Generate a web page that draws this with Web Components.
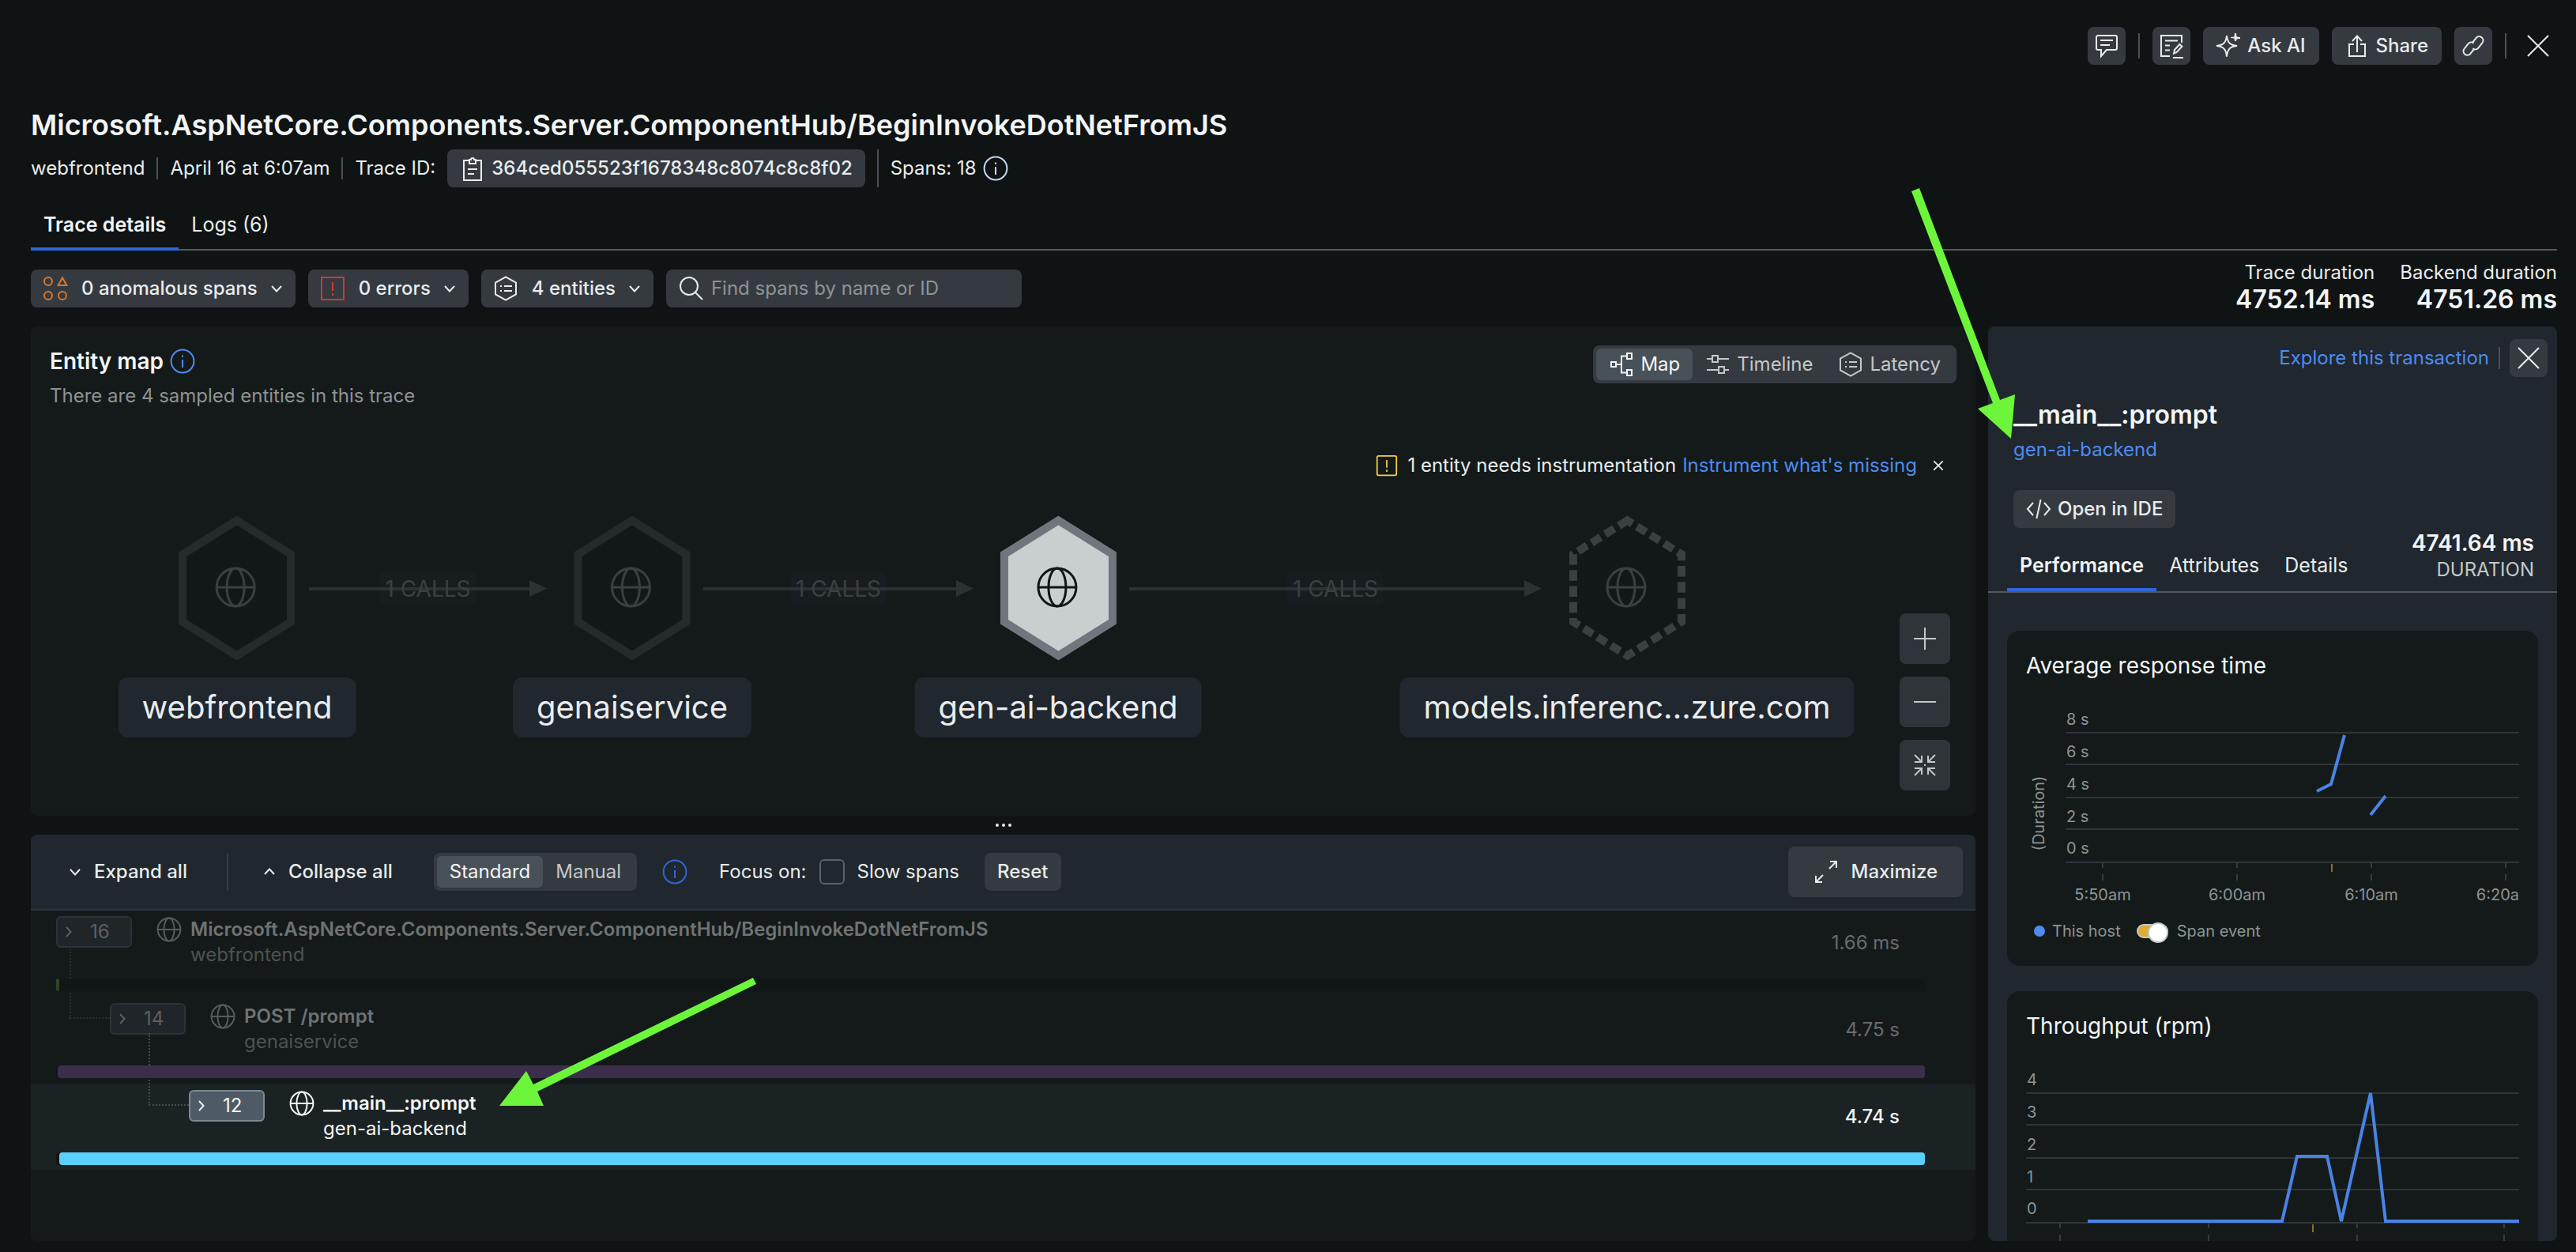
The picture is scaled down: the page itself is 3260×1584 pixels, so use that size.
<!DOCTYPE html>
<html lang="en">
<head>
<meta charset="utf-8">
<title>Trace details</title>
<style>
html,body{margin:0;background:#0f1314;color:#e8ecec;font:24px/32px Inter,"Open Sans",sans-serif}
</style>
</head>
<body>
<trace-page></trace-page>
<script>
const ICONS = {
  comment: '<path d="M2.500 1.500h11a1 1 0 0 1 1 1v7a1 1 0 0 1-1 1H8l-3.500 4v-4h-2a1 1 0 0 1-1-1v-7a1 1 0 0 1 1-1zM4 4.500h8M4 7.500h6"/>',
  note: '<path d="M14.500 6V1.500h-13v13H7M4 4.700h8M4 7.700h3M4 10.700h3M9.500 12.800l.5-2.300 3.200-3.500 1.500 1.400-3.300 3.600zM9 15.500h6.500"/>',
  sparkle: '<path d="M7 1.500C7.500 6 9 7.500 13.500 8 9 8.500 7.500 10 7 14.800 6.500 10 5 8.500.500 8 5 7.500 6.500 6 7 1.500z"/><path d="M12 0h1l.3 2.200 2.200.300v1l-2.200.300L13 5h-1l-.3-1.700L9.500 3V2.500l2.200-.3z" fill="currentColor" stroke="none"/>',
  share: '<path d="M6 7H3v7.500h10V7h-3M8 12V2M5 5l3-3.300L11 5"/>',
  link: '<path d="M7.300 6.200l2.600-3.300a2.500 2.500 0 0 1 3.900 3.100l-2.600 3.300a2.500 2.500 0 0 1-3.500.400M8.700 9.800l-2.600 3.300a2.500 2.500 0 0 1-3.900-3.100l2.600-3.300a2.500 2.500 0 0 1 3.500-.400"/>',
  close: '<path d="M1.500 1.500l13 13M14.500 1.500l-13 13"/>',
  clipboard: '<path d="M6 3H2.500v12.500h11V3H10M6 5V2.500h1a1 1 0 0 1 2 0h1V5zM5 8.500h6M5 11.500h4"/>',
  info: '<circle cx="8" cy="8" r="7.200"/><path d="M8 7v5M8 4.200v1.200"/>',
  anomaly: '<circle cx="3.500" cy="3.500" r="2.500"/><circle cx="3.500" cy="12.500" r="2.500"/><circle cx="12.500" cy="12.500" r="2.500"/><path d="M12.500 1.200l2.700 4.800H9.800z"/>',
  error: '<path d="M1 1h14v14H1zM8 4v5.500M8 11v1.500"/>',
  warning: '<rect x="1" y="1" width="14" height="14" rx="1"/><path d="M8 4v5.500M8 11v1.500"/>',
  hexlist: '<path d="M8 .700l6.500 3.600v7.400L8 15.300l-6.500-3.600V4.300zM7 6.500h5M7 9.500h5M4.500 6.500h1M4.500 9.500h1"/>',
  search: '<circle cx="6.500" cy="6.500" r="5.500"/><path d="M10.500 10.500l4.500 4.500"/>',
  map: '<path d="M1.500 6.500h3v3h-3zM11.500 1h3v3.500h-3zM11.500 11.500h3V15h-3zM4.500 8H8M11.500 2.700H8v10.600h3.500"/>',
  timeline: '<path d="M1 4.500h3.500M8 4.500h7M4.500 2.500h3.500v4H4.500zM1 11.500h7.500M12 11.500h3M8.500 9.500H12v4H8.500z"/>',
  down: '<path d="M4 6l4 4.300L12 6"/>',
  up: '<path d="M4 10l4-4.300L12 10"/>',
  right: '<path d="M6 4l3.700 4L6 12"/>',
  code: '<path d="M4.500 4L1 8l3.500 4M11.500 4L15 8l-3.500 4M9.300 2L6.700 14"/>',
  plus: '<path d="M8 1v14M1 8h14"/>',
  minus: '<path d="M1 8h14"/>',
  fit: '<path d="M1.500 1.500L5.500 5.500M6 2v4H1.500M14.500 1.500l-4 4M10 2v4h4.500M1.500 14.500l4-4M6 14v-4H1.500M14.500 14.500l-4-4M10 14v-4h4.500M7.500 8h1"/>',
  maximize: '<path d="M10 6l4.500-4.500M10.500 1.500h4v4M6 10l-4.500 4.500M5.500 14.500h-4v-4"/>',
  globe: '<circle cx="8" cy="8" r="7.200"/><ellipse cx="8" cy="8" rx="3.300" ry="7.200"/><path d="M.8 8h14.400"/>'
};
class Base extends HTMLElement {
  constructor() { super(); this.attachShadow({ mode: 'open' }); }
  connectedCallback() {
    this.shadowRoot.innerHTML = '<style>*{box-sizing:border-box}' + this.css() + '</style>' + this.html();
  }
  css() { return ''; }
  html() { return '<slot></slot>'; }
  a(n, d = '') { return this.getAttribute(n) ?? d; }
}
const def = (n, c) => customElements.define(n, c);

def('ui-icon', class extends Base {
  css() { return `:host{display:inline-flex;flex:none;width:${this.a('size', 32)}px;height:${this.a('size', 32)}px}
    svg{width:100%;height:100%;fill:none;stroke:currentColor;stroke-width:${this.a('stroke', 1)}}`; }
  html() { return `<svg viewBox="0 0 16 16" aria-hidden="true">${ICONS[this.a('name')]}</svg>`; }
});
def('ui-button', class extends Base {
  css() { return `:host{display:inline-flex;flex:none}
    button{display:flex;align-items:center;justify-content:center;gap:var(--gap,8px);height:var(--h,48px);min-width:48px;padding:var(--pad,0 8px);
    border:0;border-radius:8px;background:var(--bg,#353a41);color:var(--fg,#e8ecec);font:inherit;font-weight:500;white-space:nowrap}`; }
  html() { const l = this.a('label'); return `<button type="button"${l ? ` aria-label="${l}"` : ''}><slot></slot></button>`; }
});
def('ui-rule', class extends Base {
  css() { return `:host{display:block;flex:none;width:2px;height:var(--h,28px);background:var(--c,#4a5056)}`; }
  html() { return ''; }
});
def('ui-tab', class extends Base {
  css() { return `:host{display:flex}
    button{border:0;background:none;color:inherit;font:inherit;font-size:25px;padding:0 16px 13px;border-bottom:4px solid transparent}
    :host([active]) button{font-weight:600;border-color:#2f66d8;color:#f3f5f5}`; }
  html() { return `<button type="button" role="tab"><slot></slot></button>`; }
});
def('ui-segment', class extends Base {
  css() { return `:host{display:flex;height:48px;padding:4px;border-radius:8px;background:#353a41;color:#c3c8c9}
    button{display:flex;align-items:center;gap:8px;border:0;border-radius:6px;background:none;color:inherit;font:inherit;padding:0 16px}
    button.on{background:#495158;color:#f3f5f5}`; }
  html() { return this.a('items').split(',').map((t, i) => { const [l, ic] = t.split(':');
    return `<button type="button" class="${i ? '' : 'on'}">${ic ? `<ui-icon name="${ic}"></ui-icon>` : ''}<span>${l}</span></button>`; }).join(''); }
});
def('trace-actions', class extends Base {
  css() { return `:host{display:flex;justify-content:flex-end;align-items:center;gap:16px}ui-rule{--h:32px}.w{--pad:0 17px 0 16px}`; }
  html() { return `<ui-button label="Comments"><ui-icon name="comment"></ui-icon></ui-button><ui-rule></ui-rule>
    <ui-button label="Notes"><ui-icon name="note"></ui-icon></ui-button>
    <ui-button class="w"><ui-icon name="sparkle"></ui-icon>Ask AI</ui-button>
    <ui-button class="w"><ui-icon name="share"></ui-icon>Share</ui-button>
    <ui-button label="Copy link"><ui-icon name="link"></ui-icon></ui-button><ui-rule></ui-rule>
    <ui-button label="Close" style="--bg:none"><ui-icon name="close"></ui-icon></ui-button>`; }
});
def('trace-header', class extends Base {
  css() { return `:host{display:block;margin-top:54px}
    h1{margin:0;font-size:36px;line-height:44px;font-weight:600;color:#f3f5f5}
    .meta{display:flex;align-items:center;gap:15px;height:48px;margin-top:9px}
    .id{--pad:0 16px}.spans{display:flex;align-items:center;gap:8px}
    .tabs{display:flex;align-items:flex-end;height:80px;box-shadow:inset 0 -2px #53595f}`; }
  html() { return `<h1>Microsoft.AspNetCore.Components.Server.ComponentHub/BeginInvokeDotNetFromJS</h1>
    <div class="meta"><span>webfrontend</span><ui-rule></ui-rule><span>April 16 at 6:07am</span><ui-rule></ui-rule><span>Trace ID:</span>
    <ui-button class="id"><ui-icon name="clipboard"></ui-icon>364ced055523f1678348c8074c8c8f02</ui-button>
    <ui-rule style="--h:48px"></ui-rule><span class="spans">Spans: 18 <ui-icon name="info" style="color:#c4d8f5"></ui-icon></span></div>
    <div class="tabs" role="tablist"><ui-tab active>Trace details</ui-tab><ui-tab>Logs (6)</ui-tab></div>`; }
});
def('trace-filters', class extends Base {
  css() { return `:host{display:flex;justify-content:space-between;align-items:flex-start;padding:12px 0 16px}
    .f{display:flex;gap:16px;margin-top:12px}
    ui-button{--pad:0 12px 0 15px;--gap:12px}
    ui-button ui-icon:first-child{margin-right:5px}
    label{display:flex;align-items:center;gap:9px;width:450px;height:48px;padding:0 16px;border-radius:8px;background:#353a41}
    input{flex:1;min-width:0;border:0;background:none;font:inherit;color:#e8ecec;padding:0;outline:0}
    input::placeholder{color:#8e9494;opacity:1}
    .d{display:flex;gap:32px;text-align:right}.d b{display:block;font-size:32px;line-height:36px;font-weight:600;color:#f3f5f5}`; }
  html() { return `<div class="f">
    <ui-button><ui-icon name="anomaly" style="color:#d9782d"></ui-icon>0 anomalous spans<ui-icon name="down" size="24" stroke="1.300"></ui-icon></ui-button>
    <ui-button><ui-icon name="error" style="color:#d13a2c"></ui-icon>0 errors<ui-icon name="down" size="24" stroke="1.300"></ui-icon></ui-button>
    <ui-button><ui-icon name="hexlist"></ui-icon>4 entities<ui-icon name="down" size="24" stroke="1.300"></ui-icon></ui-button>
    <label><ui-icon name="search"></ui-icon><input type="search" placeholder="Find spans by name or ID" aria-label="Find spans"></label></div>
    <div class="d"><span>Trace duration<b>4752.14 ms</b></span><span>Backend duration<b>4751.26 ms</b></span></div>`; }
});
def('map-node', class extends Base {
  css() { return `:host{position:absolute;top:239px;left:${this.a('x')}px;transform:translateX(-50%);display:flex;flex-direction:column;align-items:center;gap:21px}
    .h{width:148px;height:184px;display:block}
    .n{padding:0 30px;border-radius:12px;background:#20272f;font-size:40px;line-height:76px;color:#e8ecec;white-space:nowrap}`; }
  html() {
    const k = this.a('kind');
    const [f, s, g] = k === 'on' ? ['#c9cfcf', '#71767e', '#101515'] : k === 'missing' ? ['#12181a', '#3a4041', '#3a4041'] : ['#12181a', '#252a2c', '#3a4041'];
    return `<svg class="h" viewBox="-74 -92 148 184"><path d="M0-85.500L68.500-42.700V42.700L0 85.500-68.500 42.700V-42.700z" fill="${f}" stroke="${s}" stroke-width="10" ${k === 'missing' ? 'stroke-dasharray="13.500 6.800" stroke-dashoffset="6"' : ''}/>
    <g fill="none" stroke="${g}" stroke-width="3" transform="translate(-1.500 -1)"><circle r="24"/><ellipse rx="11" ry="24"/><path d="M-24 0h48"/></g></svg>
    <span class="n">${this.a('name')}</span>`; }
});
def('map-edge', class extends Base {
  css() { return `:host{position:absolute;top:311px;left:${this.a('from')}px;width:${this.a('len')}px;height:41px;display:flex;align-items:center;justify-content:center}
    svg{position:absolute;inset:0;width:100%;height:100%}
    span{position:relative;font-size:28px;line-height:40px;color:#3a4042}`; }
  html() { const n = +this.a('len');
    return `<svg fill="#2c3234"><rect x="${Math.round(n / 2) - 61}" width="122" height="41" rx="6" fill="#171c20"/><path d="M0 19h${n - 22}v-9l22 10.500-22 10.500v-8H0z"/></svg><span>1 CALLS</span>`; }
});
def('entity-map', class extends Base {
  css() { return `:host{display:block;position:relative;height:619px;padding:24px;border-radius:8px;background:#141a1a;flex:none}
    header{display:flex;justify-content:space-between;align-items:flex-start}
    h2{display:flex;align-items:center;gap:8px;margin:0 0 8px;font-size:28px;line-height:40px;font-weight:600;color:#f3f5f5}
    p{margin:0;color:#8e9494}
    .warn{display:flex;justify-content:flex-end;align-items:center;gap:8px;margin-top:56px}
    a{color:#4f8bf0;text-decoration:none}
    .warn ui-icon{color:#f5d04e;margin-right:4px}
    .warn button{display:flex;border:0;background:none;color:#e8ecec;padding:0;margin:0 12px 0 12px}.warn button ui-icon{color:inherit}
    .zoom{position:absolute;right:32px;bottom:32px;display:flex;flex-direction:column;gap:16px}
    .zoom ui-button{--h:64px;--pad:0 16px;--bg:#2f343b;--fg:#c3c8c9}`; }
  html() { return `<header><div><h2>Entity map <ui-icon name="info" style="color:#4f8bf0"></ui-icon></h2><p>There are 4 sampled entities in this trace</p></div>
    <ui-segment items="Map:map,Timeline:timeline,Latency:hexlist"></ui-segment></header>
    <div class="warn"><ui-icon name="warning" size="28"></ui-icon><span>1 entity needs instrumentation</span><a href="#">Instrument what's missing</a>
    <button type="button" aria-label="Dismiss"><ui-icon name="close" size="14" stroke="2"></ui-icon></button></div>
    <map-edge from="352" len="301"></map-edge><map-edge from="851" len="342"></map-edge><map-edge from="1390" len="522"></map-edge>
    <map-node x="261" name="webfrontend"></map-node><map-node x="761" name="genaiservice"></map-node>
    <map-node x="1300" name="gen-ai-backend" kind="on"></map-node><map-node x="2020" name="models.inferenc...zure.com" kind="missing"></map-node>
    <div class="zoom"><ui-button label="Zoom in"><ui-icon name="plus"></ui-icon></ui-button><ui-button label="Zoom out"><ui-icon name="minus"></ui-icon></ui-button>
    <ui-button label="Fit"><ui-icon name="fit"></ui-icon></ui-button></div>`; }
});
def('pane-splitter', class extends Base {
  css() { return `:host{display:flex;flex:none;justify-content:center;align-items:center;gap:4px;height:24px}i{width:4px;height:4px;border-radius:2px;background:#e8ecec}`; }
  html() { return '<i></i><i></i><i></i>'; }
});
def('span-row', class extends Base {
  css() { const on = this.hasAttribute('active'), ind = +this.a('indent', 0);
    return `:host{display:flex;flex-direction:column;height:110px;padding:8px 64px 8px 32px;color:${on ? '#f3f5f5' : '#686c6d'};background:${on ? 'linear-gradient(#1b2224,#1b2224) 0 0/100% 108px no-repeat' : 'none'}}
    .top{display:flex;align-items:flex-start;padding-left:${ind}px}
    button{position:relative;display:flex;align-items:center;gap:15px;width:96px;height:40px;margin-top:-1px;padding:0 0 0 2px;font:inherit;border-radius:6px;
      color:${on ? '#f3f5f5' : '#5b6061'};background:${on ? '#4e5a66' : '#20252a'};border:2px solid ${on ? '#7c8a92' : '#2c3237'}}
    .line{position:absolute;left:-53px;bottom:18px;width:51px;height:92px;border:2px dotted ${on ? '#454c4f' : '#2a3031'};border-width:0 0 2px 2px}
    .g{margin:0 11px 0 31px;color:${on ? '#f3f5f5' : '#565b5c'}}
    strong{display:block;font-weight:600;color:${on ? '#f3f5f5' : '#6f7374'}}
    small{display:block;font-size:24px;color:${on ? '#f3f5f5' : '#4d5253'}}
    time{margin:17px 32px 0 auto;font-weight:${on ? 500 : 400}}
    .bar{position:relative;z-index:1;height:16px;margin-top:14px;border-radius:4px;background:#111717}
    .bar i{display:block;height:16px;margin-left:${this.a('start', 0)}px;border-radius:4px;${this.hasAttribute('w') ? `width:${this.a('w')}px;` : ''}background:${this.a('color')}}`; }
  html() { return `<div class="top"><button type="button">${this.hasAttribute('indent') ? '<span class="line"></span>' : ''}<ui-icon name="right" size="24" stroke="1.300"></ui-icon>${this.a('count')}</button>
    <ui-icon class="g" name="globe"></ui-icon><div><strong>${this.a('name')}</strong><small>${this.a('entity')}</small></div><time>${this.a('time')}</time></div>
    <div class="bar"><i></i></div>`; }
});
def('span-list', class extends Base {
  css() { return `:host{display:flex;flex-direction:column;flex:1;min-height:0;border-radius:8px;background:#141a1a;overflow:hidden}
    header{display:flex;align-items:center;height:96px;padding:0 16px 0 28px;background:#20272e;border-bottom:2px solid #2e343a}
    .t{--bg:none;--pad:0 16px;--gap:12px}
    .sep{--h:48px;--c:#353b42;margin:0 24px 0 34px}
    ui-segment{margin:0 32px 0 36px}
    .focus{margin:0 16px 0 40px}
    label{display:flex;align-items:center;gap:16px}
    input{appearance:none;width:32px;height:32px;margin:0;border:2px solid #5a6168;border-radius:6px}
    .reset{--pad:0 16px;margin-left:32px}
    .max{--h:64px;--pad:0 32px;--gap:16px;margin-left:auto}`; }
  html() { return `<header><ui-button class="t"><ui-icon name="down" size="24" stroke="1.300"></ui-icon>Expand all</ui-button><ui-rule class="sep"></ui-rule>
    <ui-button class="t"><ui-icon name="up" size="24" stroke="1.300"></ui-icon>Collapse all</ui-button>
    <ui-segment items="Standard,Manual"></ui-segment><ui-icon name="info" style="color:#2f66d8"></ui-icon>
    <span class="focus">Focus on:</span><label><input type="checkbox">Slow spans</label>
    <ui-button class="reset">Reset</ui-button>
    <ui-button class="max"><ui-icon name="maximize"></ui-icon>Maximize</ui-button></header>
    <span-row count="16" name="Microsoft.AspNetCore.Components.Server.ComponentHub/BeginInvokeDotNetFromJS" entity="webfrontend" time="1.66 ms" color="#2f4426" w="4"></span-row>
    <span-row count="14" indent="68" name="POST /prompt" entity="genaiservice" time="4.75 s" color="#3d2d4d" start="2"></span-row>
    <span-row active count="12" indent="168" name="__main__:prompt" entity="gen-ai-backend" time="4.74 s" color="#5bcfff" start="4"></span-row>`; }
});
def('line-chart', class extends Base {
  css() { return `:host{display:block}svg{display:block;width:100%}text{font-size:20px;fill:#8e9494}`; }
  html() {
    const x0 = +this.a('x0'), ticks = this.a('ticks').split(','), times = this.a('times');
    const rows = [[30, 20], [70, 61], [112, 102], [152, 143], [194, 183]];
    return `<svg viewBox="0 0 624 250" height="250">
    ${this.a('labels').split(',').map((t, i) => `<path d="M${x0} ${rows[i][0]}H624" stroke="#2f353a" stroke-width="2"/><text x="${x0 + 1}" y="${rows[i][1]}">${t}</text>`).join('')}
    ${ticks.map(x => `<path d="M${x} 195v6m0 8v8" stroke="#353b40" stroke-width="2"/>`).join('')}
    <path d="M${this.a('event')} 196v10" stroke="#8e6f22" stroke-width="2"/>
    <path d="${this.a('path')}" fill="none" stroke="#4a83e6" stroke-width="4"/>
    ${times ? times.split(',').map((t, i) => i < 3 ? `<text x="${ticks[i]}" y="242" text-anchor="middle">${t}</text>` : `<text x="624" y="242" text-anchor="end">${t}</text>`).join('') : ''}
    ${this.a('axis') ? `<text transform="translate(23 132) rotate(-90)" text-anchor="middle">${this.a('axis')}</text>` : ''}</svg>`; }
});
def('chart-card', class extends Base {
  css() { return `:host{display:block;flex:none;padding:24px;border-radius:16px;background:#141a1a}
    h3{margin:0 0 35px;font-size:28px;line-height:40px;font-weight:400;color:#f3f5f5}`; }
  html() { return `<h3>${this.a('title')}</h3><slot></slot>`; }
});
def('detail-panel', class extends Base {
  css() { return `:host{display:flex;flex-direction:column;border-radius:8px;background:#20272e;overflow:hidden;min-height:0}
    a{color:#4f8bf0;text-decoration:none}
    .bar{display:flex;justify-content:flex-end;align-items:center;gap:12px;padding:16px 12px 0}
    .head{padding:28px 32px 0}
    h2{margin:0 0 8px;font-size:32px;line-height:40px;font-weight:600;color:#f3f5f5}
    .ide{--pad:0 16px;margin-top:35px;display:flex}
    .tabs{display:flex;align-items:flex-end;justify-content:space-between;height:82px;padding:0 29px 0 24px;border-bottom:2px solid #53595f;flex:none}
    .l{display:flex}
    .dur{text-align:right;color:#c3c8c9;padding-bottom:11px}.dur b{display:block;font-size:28px;line-height:36px;font-weight:600;color:#f3f5f5}
    .cards{display:flex;flex-direction:column;gap:32px;padding:48px 24px 0;min-height:0}
    .legend{display:flex;align-items:center;font-size:20px;line-height:32px;color:#8e9494;margin:15px 0 4px;padding-left:10px}
    .dot{width:14px;height:14px;border-radius:7px;background:#4f8bf0;margin-right:9px}
    label{display:flex;align-items:center;gap:11px;margin-left:20px}
    input{appearance:none;position:relative;width:40px;height:18px;margin:0;border:2px solid #c3c8c9;border-radius:9px;background:#e0ab32}
    input::after{content:"";position:absolute;right:-2px;top:-4px;width:26px;height:26px;border:2px solid #c3c8c9;border-radius:13px;background:#fff;box-sizing:border-box}`; }
  html() { return `<div class="bar"><a href="#">Explore this transaction</a><ui-rule></ui-rule><ui-button label="Close panel"><ui-icon name="close"></ui-icon></ui-button></div>
    <div class="head"><h2>__main__:prompt</h2><a href="#">gen-ai-backend</a>
    <ui-button class="ide"><ui-icon name="code"></ui-icon>Open in IDE</ui-button></div>
    <div class="tabs"><div class="l" role="tablist"><ui-tab active>Performance</ui-tab><ui-tab>Attributes</ui-tab><ui-tab>Details</ui-tab></div>
    <div class="dur"><b>4741.64 ms</b>DURATION</div></div>
    <div class="cards"><chart-card title="Average response time">
      <line-chart labels="8 s,6 s,4 s,2 s,0 s" x0="50" ticks="97,267,437,607" times="5:50am,6:00am,6:10am,6:20a" event="387" axis="(Duration)" path="M368 104l18-9 17-62M436 134l19-24"></line-chart>
      <div class="legend"><span class="dot"></span>This host<label><input type="checkbox" checked>Span event</label></div>
    </chart-card>
    <chart-card title="Throughput (rpm)">
      <line-chart labels="4,3,2,1,0" x0="0" ticks="43,231,419,605" event="363" path="M78 192H324L343 110H381L399 192 436 30 455 192H624"></line-chart>
    </chart-card></div>`; }
});
def('callout-arrow', class extends Base {
  css() { return `:host{position:absolute;left:${this.a('x')}px;top:${this.a('y')}px;pointer-events:none;z-index:5}svg{display:block;overflow:visible;fill:#6df53b}`; }
  html() { return `<svg width="10" height="10"><path d="${this.a('d')}"/></svg>`; }
});
def('trace-page', class extends Base {
  css() { return `:host{position:relative;display:flex;flex-direction:column;height:100vh;padding:34px 24px 14px 39px;overflow:hidden;box-sizing:border-box}
    main{flex:1;min-height:0;display:grid;grid-template-columns:1fr 720px;gap:16px}
    .col{display:flex;flex-direction:column;min-height:0}`; }
  html() { return `<trace-actions></trace-actions><trace-header></trace-header><trace-filters></trace-filters>
    <main><div class="col"><entity-map></entity-map><pane-splitter></pane-splitter><span-list></span-list></div><detail-panel></detail-panel></main>
    <callout-arrow x="2419" y="238" d="M0 4L10 0 112 268 131 261 126 317 84 279 103 272z"></callout-arrow>
    <callout-arrow x="632" y="1237" d="M321 0L325 8 48 144 56 162 0 162 34 118 43 135z"></callout-arrow>`; }
});
</script>
</body>
</html>
